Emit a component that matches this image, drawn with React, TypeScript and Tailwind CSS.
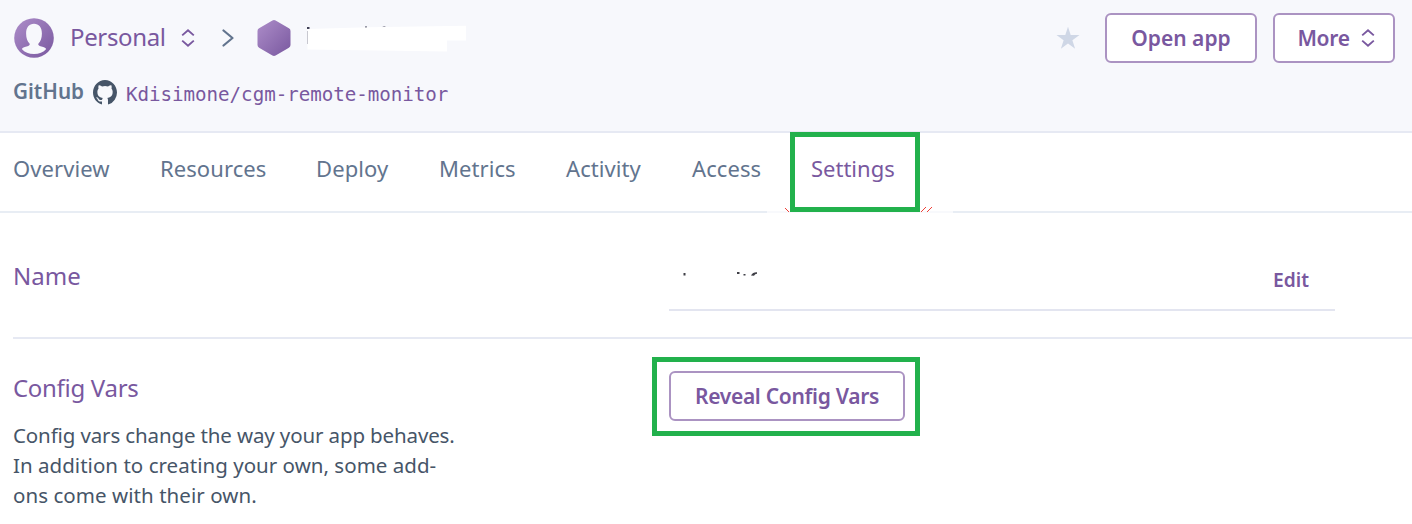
import React from "react";

function UpDown({ className }: { className?: string }) {
  return (
    <svg className={className} width="14" height="18" viewBox="0 0 14 18" fill="none" stroke="#79589f" strokeWidth="1.9">
      <path d="M1.200 6.400 7 1.300l5.800 5.100M1.200 11.600l5.800 5.100 5.800-5.100" />
    </svg>
  );
}

function Avatar() {
  return (
    <svg className="shrink-0" width="40" height="40" viewBox="0 0 40 40">
      <defs>
        <linearGradient id="avatar" x1="0" y1="0" x2="1" y2="1">
          <stop offset="0" stopColor="#ad8dc9" />
          <stop offset="1" stopColor="#79589f" />
        </linearGradient>
      </defs>
      <circle cx="20" cy="20" r="19.8" fill="url(#avatar)" />
      <path
        d="M20 5.800c4.900 0 7.900 3.700 7.900 9.600 0 4.600-1.300 7.900-3.400 10.100-.8 1.100.2 2.300 2 2.700 2.500.7 4.900 1.300 5.700 2.700C29.500 34.300 25 36 20 36S10.500 34.300 7.800 30.900c.8-1.400 3.200-2 5.700-2.700 1.800-.4 2.800-1.600 2-2.700-2.100-2.200-3.400-5.500-3.400-10.100 0-5.900 3-9.600 7.900-9.600Z"
        fill="#f7f8fc"
      />
    </svg>
  );
}

function Hexagon() {
  return (
    <svg className="shrink-0" width="34" height="36" viewBox="0 0 34 36">
      <defs>
        <linearGradient id="hexagon" x1="0" y1="0" x2="1" y2="1">
          <stop offset="0" stopColor="#ad8dc9" />
          <stop offset="1" stopColor="#79589f" />
        </linearGradient>
      </defs>
      <path
        d="M15.400.5Q17-.4 18.600.5L31.900 8.200Q33.500 9.100 33.500 10.900V25.100Q33.500 26.900 31.900 27.800L18.600 35.500Q17 36.400 15.400 35.500L2.100 27.800Q.5 26.900.5 25.100V10.900Q.5 9.100 2.100 8.200Z"
        fill="url(#hexagon)"
      />
    </svg>
  );
}

function RedactedAppName() {
  return (
    <svg className="block shrink-0" width="164" height="30" viewBox="0 0 164 30">
      <path d="M2 4h2.500v2H2zM60 3.500h2v1.500h-2zM76.500 4.500q3-2 5 0z" fill="#3f3f54" />
      <path d="M2 8h.8v13H2z" fill="#777788" />
      <path d="M2.500 6 64 4.200 161 2.800V17.500h-19v11L2.500 26.500Z" fill="#fff" />
    </svg>
  );
}

const tabs = [
  { label: "Overview", width: "w-[147px]" },
  { label: "Resources", width: "w-[156px]" },
  { label: "Deploy", width: "w-[123px]" },
  { label: "Metrics", width: "w-[127px]" },
  { label: "Activity", width: "w-[126px]" },
  { label: "Access", width: "w-[119px]" },
  { label: "Settings", width: "w-[100px]" },
];

export default function App() {
  return (
    <div className="relative h-[524px] w-[1412px] overflow-hidden bg-white font-['Noto_Sans',sans-serif] text-[#79589f]">
      <header className="h-[133px] border-b-2 border-[#e6e9f3] bg-[#f7f8fc] pt-[13px] pr-[17px] pl-[14px]">
        <div className="flex h-[50px] items-center">
          <Avatar />
          <span className="ml-4 w-[111px] pb-[3px] text-2xl tracking-[-0.350px]">Personal</span>
          <UpDown />
          <svg className="ml-[27px]" width="12" height="18" viewBox="0 0 12 18" fill="none" stroke="#62748e" strokeWidth="2.2" strokeLinecap="round" strokeLinejoin="round">
            <path d="m1.500 1.500 9 7.500-9 7.500" />
          </svg>
          <span className="ml-[23px]"><Hexagon /></span>
          <span className="ml-[14px]"><RedactedAppName /></span>
          <svg className="ml-auto" width="24" height="24" viewBox="0 0 24 24" fill="#cfd7e6">
            <path d="m12 .7 2.700 8.400h8.800l-7.100 5.200 2.700 8.400L12 17.500l-7.100 5.200 2.700-8.400L.5 9.100h8.800Z" />
          </svg>
          <button className="ml-[25px] h-[50px] w-[152px] rounded-md border-2 border-[#ab93c2] bg-white pt-px text-[21px] font-semibold">Open app</button>
          <button className="ml-4 flex h-[50px] w-[122px] items-center justify-center gap-[11px] rounded-md border-2 border-[#ab93c2] bg-white pl-1 text-[21px] font-semibold">
            <span className="pt-px tracking-[-0.300px]">More</span>
            <UpDown />
          </button>
        </div>
        <div className="mt-[13px] -ml-px flex h-[32px] items-center">
          <span className="w-[80px] text-[20.700px] font-semibold text-[#62748e]">GitHub</span>
          <svg width="24" height="25" viewBox="0 0 16 16" fill="#465568" preserveAspectRatio="none">
            <path d="M8 0C3.580 0 0 3.580 0 8c0 3.540 2.290 6.530 5.470 7.590.4.070.55-.17.55-.38 0-.19-.01-.82-.01-1.490-2.010.37-2.530-.49-2.690-.94-.09-.23-.48-.94-.82-1.130-.28-.15-.68-.52-.01-.53.63-.01 1.080.58 1.230.82.72 1.210 1.870.87 2.330.66.070-.52.28-.87.51-1.070-1.780-.2-3.640-.89-3.640-3.950 0-.87.31-1.590.82-2.150-.08-.2-.36-1.020.08-2.120 0 0 .67-.21 2.200.82a7.600 7.600 0 0 1 4 0c1.530-1.040 2.200-.82 2.200-.82.44 1.100.16 1.920.08 2.120.51.560.82 1.270.82 2.150 0 3.070-1.870 3.750-3.650 3.950.29.25.54.730.54 1.480 0 1.070-.01 1.930-.01 2.200 0 .21.15.46.55.38A8.010 8.010 0 0 0 16 8c0-4.420-3.580-8-8-8Z" />
          </svg>
          <span className="ml-[9px] pt-[6px] font-['DejaVu_Sans_Mono',monospace] text-[19.200px] tracking-[-0.040px]">Kdisimone/cgm-remote-monitor</span>
        </div>
      </header>

      <nav className="flex h-[80px] items-center border-b-2 border-[#e8edf4] pb-[7px] pl-[13px] text-[22px] text-[#62748e]">
        {tabs.map((tab) => (
          <span key={tab.label} className={`${tab.width} ${tab.label === "Settings" ? "text-[#79589f]" : "tracking-[0.080px]"}`}>
            {tab.label}
          </span>
        ))}
      </nav>

      <section className="ml-[13px] flex h-[126px] border-b-2 border-[#e6e9f3]">
        <h2 className="mt-[47px] w-[656px] text-2xl">Name</h2>
        <div className="mt-[40px] flex h-[58px] w-[666px] justify-between border-b-2 border-[#e3e5f0] pr-[26px]">
          <svg className="ml-3 mt-[18px]" width="80" height="8" viewBox="0 0 80 8" fill="#3f3f46">
            <path d="M2.500 2h2v2.500h-2zM56 1h2.500v2H56zM62.500 3h2v1.500h-2zM70 4.500q2-3.500 6-3.200v1.500q-2 0-3 2Z" />
          </svg>
          <span className="pt-[13px] text-[19.200px] font-semibold">Edit</span>
        </div>
      </section>

      <section className="ml-[13px] flex">
        <div className="w-[656px] pt-[31px]">
          <h2 className="text-2xl leading-9 tracking-[-0.300px]">Config Vars</h2>
          <p className="mt-[14px] text-[20.500px] leading-[30px] text-[#465568]">
            <span className="tracking-[-0.130px]">Config vars change the way your app behaves.</span>
            <br />
            <span className="tracking-[0.030px]">In addition to creating your own, some add-</span>
            <br />
            <span className="tracking-[0.060px]">ons come with their own.</span>
          </p>
        </div>
        <button className="mt-8 h-[50px] w-[236px] rounded-md border-2 border-[#ab93c2] bg-white pt-px text-[21px] font-semibold tracking-[-0.300px]">Reveal Config Vars</button>
      </section>

      <div className="absolute top-[211px] left-[767px] h-[2px] w-[186px] bg-[#f8f9fc]" />
      <svg className="absolute top-[207px] left-[784px]" width="150" height="6" viewBox="0 0 150 6" stroke="#ef4038" strokeWidth="1">
        <path d="m1 1 4 4M137 5l5-5M143 5l5-5" />
      </svg>
      <div className="absolute top-[132px] left-[790px] h-[80px] w-[130px] border-5 border-[#22b14c]" />
      <div className="absolute top-[357px] left-[652px] h-[79px] w-[268px] border-5 border-[#22b14c]" />
    </div>
  );
}
